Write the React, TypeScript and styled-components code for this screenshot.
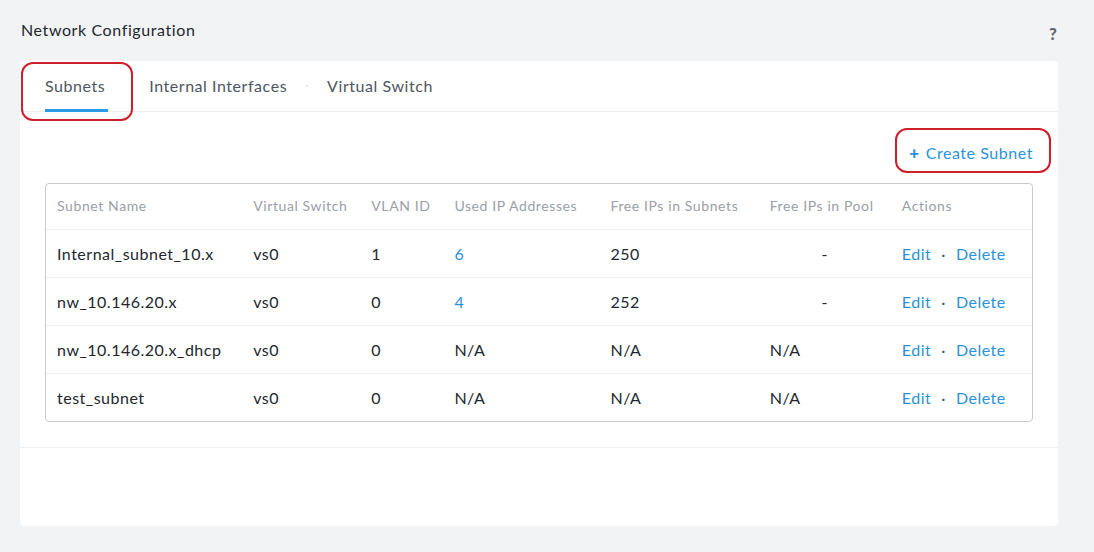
import React from "react";
import styled, { createGlobalStyle } from "styled-components";

const Global = createGlobalStyle`
  html, body { margin: 0; padding: 0; background: #f2f3f5; }
  body { font-family: Lato, "Open Sans", Arial, sans-serif; }
`;

const Page = styled.div`
  width: 1094px;
  height: 552px;
  box-sizing: border-box;
  padding: 19px 36px 0 20px;
  position: relative;
`;

const Header = styled.div`
  display: flex;
  justify-content: space-between;
  align-items: center;
  height: 20px;
  padding-left: 1px;
  margin-bottom: 22px;
`;

const Title = styled.h1`
  margin: 0;
  font-size: 16px;
  font-weight: 400;
  letter-spacing: 0.6px;
  color: #22272e;
`;

const Help = styled.span`
  font-size: 17px;
  font-weight: 900;
  color: #5f6670;
  margin-top: 8px;
  margin-right: 1px;
`;

const Card = styled.div`
  background: #fff;
  border-radius: 4px;
  height: 465px;
  display: flex;
  flex-direction: column;
`;

const TabBar = styled.div`
  display: flex;
  align-items: stretch;
  height: 51px;
  border-bottom: 1px solid #eceef0;
  padding-left: 25px;
  box-sizing: border-box;
`;

const Tab = styled.div<{ $active?: boolean }>`
  display: flex;
  align-items: center;
  font-size: 16px;
  letter-spacing: 0.55px;
  color: #4d5661;
  position: relative;
  padding-bottom: 1px;
  padding-right: ${(p) => (p.$active ? 3 : 0)}px;
  &::after {
    content: "";
    position: absolute;
    left: 0;
    right: 0;
    bottom: -1px;
    height: 3px;
    background: ${(p) => (p.$active ? "#2a9be6" : "transparent")};
  }
`;

const TabGap = styled.span<{ $dot?: boolean }>`
  width: 2px;
  height: 2px;
  background: ${(p) => (p.$dot ? "#e4e6e9" : "transparent")};
  align-self: center;
  margin: 0 ${(p) => (p.$dot ? 19 : 19.5)}px;
`;

const Body = styled.div`
  padding: 15px 25px 25px 25px;
  border-bottom: 1px solid #eef0f2;
`;

const Toolbar = styled.div`
  display: flex;
  justify-content: flex-end;
  height: 50px;
  align-items: center;
  margin-bottom: 6px;
`;

const CreateLink = styled.a`
  color: #2a91dc;
  font-size: 16px;
  letter-spacing: 0.55px;
  text-decoration: none;
  display: flex;
  align-items: center;
  gap: 6px;
`;

const Plus = styled.span`
  font-weight: 900;
  font-size: 17px;
`;

const TableBox = styled.div`
  border: 1px solid #c9cbce;
  border-radius: 4px;
  overflow: hidden;
`;

const Table = styled.table`
  width: 100%;
  border-collapse: collapse;
  table-layout: fixed;
`;

const Th = styled.th<{ $w: number }>`
  box-sizing: border-box;
  width: ${(p) => p.$w}px;
  text-align: left;
  font-weight: 400;
  font-size: 14px;
  letter-spacing: 0.6px;
  color: #9aa0a7;
  height: 45px;
  padding: 0 0 1px 11px;
  border-bottom: 1px solid #eef0f2;
`;

const Td = styled.td<{ $center?: boolean }>`
  box-sizing: border-box;
  font-size: 16px;
  letter-spacing: 0.5px;
  color: #22272e;
  height: 48px;
  padding: 0 0 0 ${(p) => (p.$center ? 0 : 11)}px;
  text-align: ${(p) => (p.$center ? "center" : "left")};
  border-bottom: 1px solid #eef0f2;
  tr:last-child > & { border-bottom: none; }
`;

const Link = styled.a`
  color: #2a91dc;
  text-decoration: none;
`;

const Sep = styled.span`
  color: #4a525c;
  margin: 0 10px;
`;

const Annot = styled.div<{ $x: number; $y: number; $w: number; $h: number }>`
  position: absolute;
  left: ${(p) => p.$x}px;
  top: ${(p) => p.$y}px;
  width: ${(p) => p.$w}px;
  height: ${(p) => p.$h}px;
  border: 2px solid #cf1f2b;
  border-radius: 12px;
  box-sizing: border-box;
  pointer-events: none;
`;

const cols = [
  { label: "Subnet Name", w: 196 },
  { label: "Virtual Switch", w: 118 },
  { label: "VLAN ID", w: 83 },
  { label: "Used IP Addresses", w: 156 },
  { label: "Free IPs in Subnets", w: 159 },
  { label: "Free IPs in Pool", w: 132 },
  { label: "Actions", w: 141 },
];

type Row = { name: string; vlan: string; used: string; usedLink: boolean; free: string; pool: string };

const rows: Row[] = [
  { name: "Internal_subnet_10.x", vlan: "1", used: "6", usedLink: true, free: "250", pool: "-" },
  { name: "nw_10.146.20.x", vlan: "0", used: "4", usedLink: true, free: "252", pool: "-" },
  { name: "nw_10.146.20.x_dhcp", vlan: "0", used: "N/A", usedLink: false, free: "N/A", pool: "N/A" },
  { name: "test_subnet", vlan: "0", used: "N/A", usedLink: false, free: "N/A", pool: "N/A" },
];

export default function App() {
  return (
    <Page>
      <Global />
      <Header>
        <Title>Network Configuration</Title>
        <Help>?</Help>
      </Header>
      <Card>
        <TabBar>
          <Tab $active>Subnets</Tab>
          <TabGap />
          <Tab>Internal Interfaces</Tab>
          <TabGap $dot />
          <Tab>Virtual Switch</Tab>
        </TabBar>
        <Body>
          <Toolbar>
            <CreateLink href="#">
              <Plus>+</Plus>Create Subnet
            </CreateLink>
          </Toolbar>
          <TableBox>
            <Table>
              <thead>
                <tr>
                  {cols.map((c) => (
                    <Th key={c.label} $w={c.w}>
                      {c.label}
                    </Th>
                  ))}
                </tr>
              </thead>
              <tbody>
                {rows.map((r) => (
                  <tr key={r.name}>
                    <Td>{r.name}</Td>
                    <Td>vs0</Td>
                    <Td>{r.vlan}</Td>
                    <Td>{r.usedLink ? <Link href="#">{r.used}</Link> : r.used}</Td>
                    <Td>{r.free}</Td>
                    <Td $center={r.pool === "-"}>{r.pool}</Td>
                    <Td>
                      <Link href="#">Edit</Link>
                      <Sep>·</Sep>
                      <Link href="#">Delete</Link>
                    </Td>
                  </tr>
                ))}
              </tbody>
            </Table>
          </TableBox>
        </Body>
      </Card>
      <Annot $x={21} $y={62} $w={112} $h={59} />
      <Annot $x={895} $y={128} $w={156} $h={45} />
    </Page>
  );
}
